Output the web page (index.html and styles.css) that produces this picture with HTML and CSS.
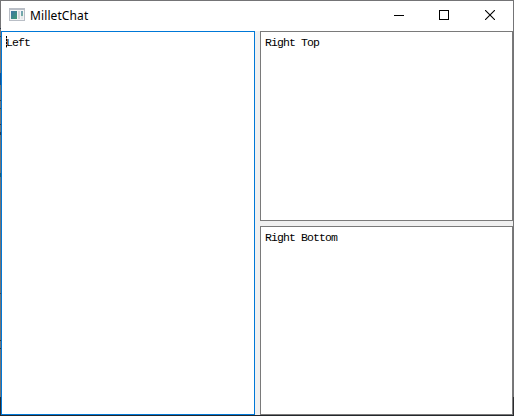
FILE: index.html
```html
<!DOCTYPE html>
<html lang="en">
<head>
<meta charset="utf-8">
<title>MilletChat</title>
<link rel="stylesheet" href="styles.css">
</head>
<body>
<div class="window">
  <header class="titlebar">
    <svg class="app-icon" width="16" height="14" viewBox="0 0 16 14" shape-rendering="crispEdges">
      <defs><linearGradient id="pane" x1="0" y1="0" x2="1" y2="1"><stop offset="0" stop-color="#3c74a6"/><stop offset="1" stop-color="#3f9a72"/></linearGradient></defs>
      <rect width="16" height="13" fill="#b9bec6"/>
      <rect x="1" y="2" width="14" height="10" fill="#f3f4f5"/>
      <rect x="2" y="3" width="6" height="8" fill="url(#pane)"/>
      <rect x="9" y="3" width="2" height="8" fill="#d4d6da"/>
      <rect x="12" y="3" width="2" height="5" fill="url(#pane)" opacity=".7"/>
      <rect x="12" y="8" width="2" height="3" fill="#e6e8ea"/>
    </svg>
    <h1 class="title">MilletChat</h1>
    <div class="controls">
      <svg width="10" height="10" shape-rendering="crispEdges"><path d="M0 5.5h10" stroke="#000"/></svg>
      <svg width="10" height="10" shape-rendering="crispEdges"><rect x=".5" y=".5" width="9" height="9" fill="none" stroke="#000"/></svg>
      <svg class="close" width="10" height="10"><path d="M0 0l10 10M10 0L0 10" stroke="#000" stroke-width="1.1"/></svg>
    </div>
  </header>
  <main class="splitter">
    <section class="pane focused">Left<span class="caret"></span></section>
    <div class="column">
      <section class="pane">Right Top</section>
      <section class="pane">Right Bottom</section>
    </div>
  </main>
</div>
</body>
</html>
```
FILE: styles.css
```css
* { box-sizing: border-box; }
body { margin: 0; overflow: hidden; }
.window {
  height: 416px;
  padding: 1px;
  display: flex;
  flex-direction: column;
  background:
    linear-gradient(#24272b, #24272b) 0 100% / 100% 1px no-repeat,
    linear-gradient(#2b2b2e, #2b2b2e) 100% 100% / 1px 19px no-repeat,
    linear-gradient(#747476 28px, #29344a 28px 29px, #747476 29px 36px, #38404c 36px 37px, #747476 37px 73px, #17528e 73px 85px, #747476 85px 100px, #303a4a 100px 101px, #747476 101px 108px, #204878 108px 109px, #77775c 109px 111px, #747476 111px 124px, #303a4a 124px 125px, #747476 125px 132px, #303a4a 132px 135px, #747476 135px 173px, #245c6c 173px 177px, #747476 177px 293px, #45474a 293px 294px, #747476 294px 340px, #303338 340px 341px, #747476 341px 348px, #303338 348px 349px, #747476 349px 397px, #2b2b2e 397px) 0 0 / 1px 100% no-repeat,
    #747476;
}
.titlebar {
  height: 30px;
  flex: none;
  display: flex;
  align-items: center;
  padding: 0 18px 0 8px;
  background: #fff;
}
.app-icon { margin-top: -2px; }
.title {
  margin: 0 0 0 5px;
  font: 400 12px/16px "Noto Sans", sans-serif;
  letter-spacing: .1px;
  color: #000;
}
.controls { display: flex; gap: 35px; margin: -2px 0 0 auto; }
.controls svg { display: block; }
.controls .close { margin-left: 1px; }
.splitter {
  flex: 1;
  display: grid;
  grid-template-columns: 254px 253px;
  gap: 5px;
  background: #f0f0f0;
}
.column { display: grid; grid-template-rows: 190px 189px; gap: 5px; }
.pane {
  position: relative;
  padding: 4px;
  border: 1px solid #7a7a7a;
  background: #fff;
  color: #000;
  font: 11.5px/14px "Liberation Mono", monospace;
  letter-spacing: -.9px;
}
.focused { border-color: #0078d7; }
.caret {
  position: absolute;
  left: 4px;
  top: 4px;
  width: 1px;
  height: 12px;
  background: repeating-linear-gradient(#000 0 2px, #999 2px 3px);
}
```
